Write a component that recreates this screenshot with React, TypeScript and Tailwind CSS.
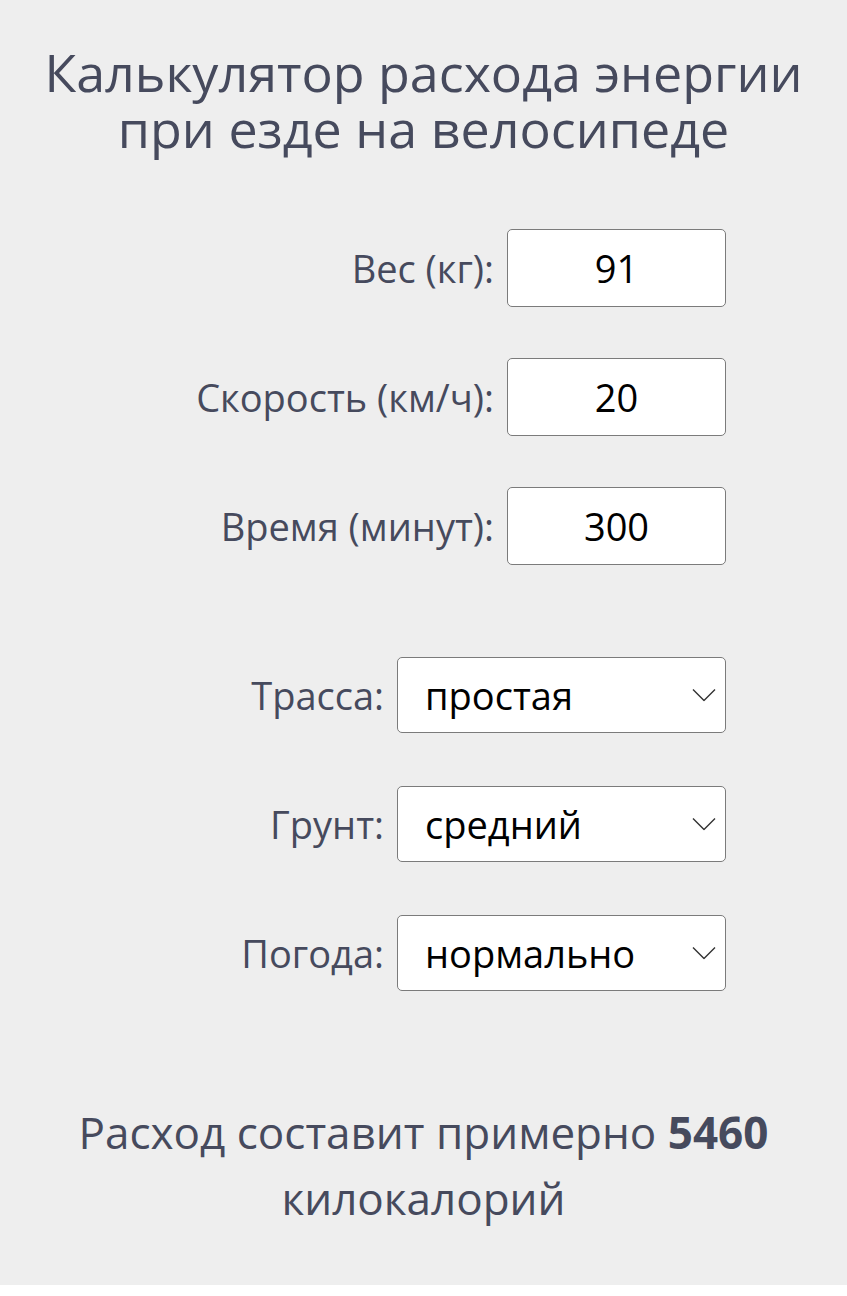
import { useState } from 'react';

const numberFields = [
  { label: 'Вес (кг):', value: '91' },
  { label: 'Скорость (км/ч):', value: '20' },
  { label: 'Время (минут):', value: '300' },
];

const selectFields = [
  { label: 'Трасса:', value: 'простая', options: ['простая', 'средняя', 'сложная'] },
  { label: 'Грунт:', value: 'средний', options: ['лёгкий', 'средний', 'тяжёлый'] },
  { label: 'Погода:', value: 'нормально', options: ['хорошо', 'нормально', 'плохо'] },
];

const Chevron = () => (
  <svg
    className="pointer-events-none absolute right-[10px] top-1/2 -translate-y-1/2"
    width="24"
    height="13"
    viewBox="0 0 24 13"
    fill="none"
  >
    <polyline points="1,1 12,12 23,1" stroke="#333" strokeWidth="1.4" />
  </svg>
);

export default function App() {
  const [values] = useState(numberFields.map((f) => f.value));

  return (
    <div className="min-h-screen bg-white font-['Open_Sans',sans-serif]">
      <div className="bg-[#eeeeee] pt-[44px] pb-[54px] text-[#464a5d]">
        {/* Title */}
        <h1 className="text-center text-[52px] leading-[56px] font-normal">
          Калькулятор расхода энергии
          <br />
          при езде на велосипеде
        </h1>

        {/* Number inputs */}
        <div className="mt-[73px] flex flex-col gap-[51px] pr-[121px]">
          {numberFields.map((f, i) => (
            <div key={f.label} className="flex items-center justify-end gap-[13px]">
              <label className="text-[38px] leading-none">{f.label}</label>
              <input
                readOnly
                value={values[i]}
                className="h-[78px] w-[219px] rounded-[5px] border border-[#7b7b7b] bg-white text-center text-[38px] text-black outline-none"
              />
            </div>
          ))}
        </div>

        {/* Selects */}
        <div className="mt-[92px] flex flex-col gap-[53px] pr-[121px]">
          {selectFields.map((f) => (
            <div key={f.label} className="flex items-center justify-end gap-[13px]">
              <label className="text-[38px] leading-none">{f.label}</label>
              <div className="relative">
                <select
                  defaultValue={f.value}
                  className="h-[76px] w-[329px] appearance-none rounded-[5px] border border-[#7b7b7b] bg-white pl-[27px] text-[38px] text-black outline-none"
                >
                  {f.options.map((o) => (
                    <option key={o}>{o}</option>
                  ))}
                </select>
                <Chevron />
              </div>
            </div>
          ))}
        </div>

        {/* Result */}
        <p className="mt-[108px] px-[60px] text-center text-[44px] leading-[66px]">
          Расход составит примерно <b className="font-bold">5460</b> килокалорий
        </p>
      </div>
    </div>
  );
}
